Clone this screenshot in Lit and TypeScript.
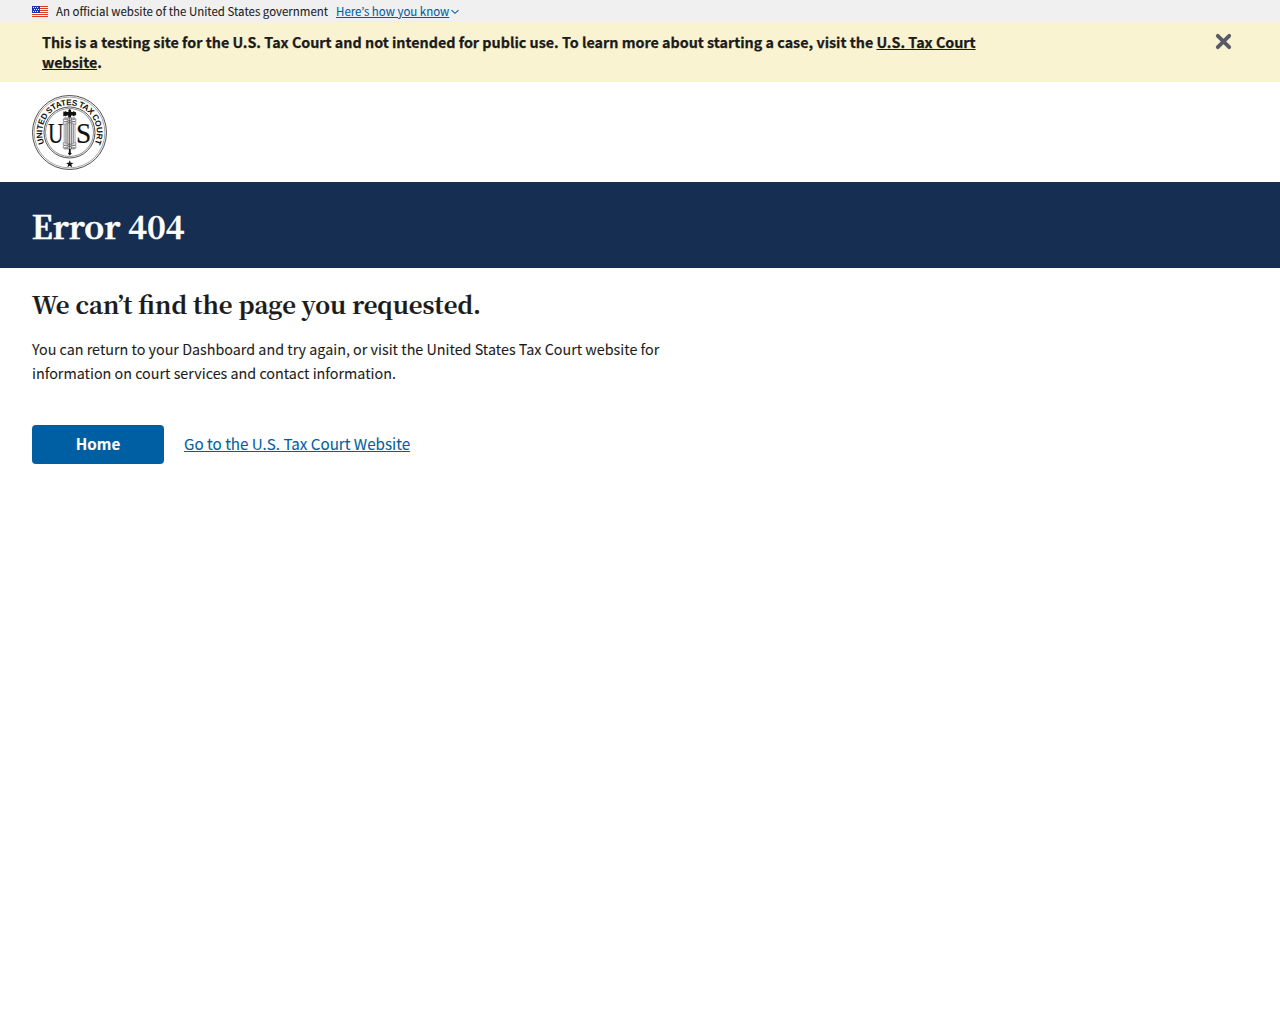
import { LitElement, html, css, svg } from "lit";
import { customElement } from "lit/decorators.js";

const flag = svg`
  <svg class="flag" viewBox="0 0 16 11" width="16" height="11" shape-rendering="crispEdges" aria-hidden="true">
    <rect width="16" height="11" fill="#fff"/>
    <path fill="#db3e1f" d="M0 0h16v1H0zM0 2h16v1H0zM0 4h16v1H0zM0 6h16v1H0zM0 8h16v1H0zM0 10h16v1H0z"/>
    <rect width="8" height="7" fill="#1e33b1"/>
    <path fill="#fff" d="M1 1h1v1H1zM3 1h1v1H3zM5 1h1v1H5zM2 3h1v1H2zM4 3h1v1H4zM6 3h1v1H6zM1 5h1v1H1zM3 5h1v1H3zM5 5h1v1H5z"/>
  </svg>`;

const seal = svg`
  <svg class="seal" viewBox="0 0 75 75" width="75" height="75" role="img">
    <defs><path id="rim" d="M12.46 48.4A27.3 27.3 0 1 1 62.54 48.4"/></defs>
    <g fill="none" stroke="#222">
      <circle cx="37.5" cy="37.5" r="37" stroke-width=".8"/>
      <circle cx="37.5" cy="37.5" r="35.4" stroke-width=".4"/>
      <circle cx="37.5" cy="37.5" r="25.5" stroke-width=".8"/>
      <circle cx="37.5" cy="37.5" r="24" stroke-width=".5"/>
    </g>
    <text class="rim-text"><textPath href="#rim" textLength="108" lengthAdjust="spacing">UNITED STATES TAX COURT</textPath></text>
    <text class="letter" x="16" y="48" textLength="15.4" lengthAdjust="spacingAndGlyphs">U</text>
    <text class="letter" x="44" y="48" textLength="15.2" lengthAdjust="spacingAndGlyphs">S</text>
    <g stroke="#444" stroke-width=".5" fill="#fff">
      <path d="M32.2 22.8h10.8v31.2h-10.8z"/>
      <path fill="none" stroke-width=".8" d="M34 23v31M35.9 23v31M37.6 23v31M39.3 23v31M41.2 23v31"/>
      <path d="M31.3 24l12.6 3.2v2.2L31.3 26.2zM43.9 24l-12.6 3.2v2.2l12.6-3.2zM31.3 47.6l12.6 3.2v2.2L31.3 49.8zM43.9 47.6l-12.6 3.2v2.2l12.6-3.2z"/>
    </g>
    <path fill="#111" d="M36.4 15l1.3-1 1.3 1v1.8l1.6.1 1.5-.9.4 1 1.6.3v3l-1.6.3-.4 1-1.5-1h-1.6v1.8h-2.8v-1.8h-1.3l-1.5 1-.5-.8-1.6.4v-4.8l1.6.4.5-.8 1.5.9h1.5zM36.9 54h1.8v3.4l1 1.2-1.9 1.9-1.9-1.9 1-1.2z"/>
    <path fill="#111" d="M37.7 65.2l1 2.6 2.8.1-2.2 1.7.8 2.7-2.4-1.5-2.3 1.5.8-2.7-2.2-1.7 2.8-.1z"/>
  </svg>`;

@customElement("app-root")
export class AppRoot extends LitElement {
  static styles = css`
    :host {
      display: block;
      min-height: 1024px;
      background: #fff;
      color: #1b1b1b;
      font-family: "Noto Sans CJK JP", "Noto Sans", sans-serif;
      -webkit-text-stroke-width: .08px;
    }
    a { color: #005ea2; text-decoration: underline; }
    h1, h2, p { margin: 0; }
    .gov {
      display: flex;
      align-items: center;
      height: 22px;
      padding: 0 32px;
      box-sizing: border-box;
      background: #f0f0f0;
      font-size: 11.47px;
      line-height: 16px;
      white-space: nowrap;
    }
    .flag { margin: 1px 8px 0 0; }
    .gov-link { margin-left: 8px; }
    .chevron { margin: 2px 0 0 2px; }
    .notice {
      display: flex;
      justify-content: space-between;
      height: 60px;
      padding: 10px 48px 0 42px;
      box-sizing: border-box;
      background: #faf3d1;
      font-size: 14.325px;
      font-weight: 700;
      line-height: 20px;
      -webkit-text-stroke-width: .25px;
    }
    .notice a { color: #1b1b1b; }
    .close { padding: 0; border: 0; background: none; height: 17px; display: flex; margin-top: 1px; }
    .brand { height: 100px; padding: 13px 32px; box-sizing: border-box; }
    .seal { display: block; }
    .rim-text { font: 700 8.2px "Liberation Sans", sans-serif; word-spacing: -.6px; fill: #111; }
    .letter { font: 400 29px "Liberation Serif", serif; fill: #111; stroke: #111; stroke-width: .2px; }
    .title-bar { height: 86px; padding: 19px 32px; box-sizing: border-box; background: #162e51; color: #fff; }
    h1 { margin-left: -.5px; font: 700 32px/48px "Noto Serif CJK JP", "Liberation Serif", serif; -webkit-text-stroke-width: .5px; }
    .content { padding: 19px 32px; }
    h2 { font: 700 23.9px/34px "Noto Serif CJK JP", "Liberation Serif", serif; -webkit-text-stroke-width: .2px; }
    .lead { margin-top: 16px; font-size: 14.33px; line-height: 24px; }
    .actions { display: flex; align-items: center; gap: 20px; margin-top: 40px; font-size: 15.18px; line-height: 20px; }
    .actions a { padding-bottom: 3px; }
    .home {
      width: 132px;
      height: 39px;
      padding: 0 0 3px;
      border: 0;
      border-radius: 4px;
      background: #005ea2;
      color: #fff;
      font: inherit;
      font-weight: 700;
    }
  `;

  render() {
    return html`
      <div class="gov">
        ${flag}<span class="official">An official website of the United States government</span>
        <a class="gov-link" href="#">Here’s how you know</a>
        <svg class="chevron" width="8" height="6" viewBox="0 0 8 6"><path d="M.5 1.2 4 4.3 7.5 1.2" fill="none" stroke="#005ea2" stroke-width="1.1"/></svg>
      </div>
      <div class="notice">
        <p>This is a testing site for the U.S. Tax Court and not intended for public use. To learn more about starting a case, visit the <a href="#">U.S. Tax Court<br>website</a>.</p>
        <button class="close"><svg width="17" height="17" viewBox="0 0 17 17"><path d="M2.8 2.8l11.4 11.4M14.2 2.8L2.8 14.2" stroke="#565c65" stroke-width="3.8" stroke-linecap="round"/></svg></button>
      </div>
      <header class="brand">${seal}</header>
      <div class="title-bar"><h1>Error 404</h1></div>
      <main class="content">
        <h2>We can’t find the page you requested.</h2>
        <p class="lead">You can return to your Dashboard and try again, or visit the United States Tax Court website for<br>information on court services and contact information.</p>
        <div class="actions">
          <button class="home">Home</button>
          <a href="#">Go to the U.S. Tax Court Website</a>
        </div>
      </main>
    `;
  }
}
